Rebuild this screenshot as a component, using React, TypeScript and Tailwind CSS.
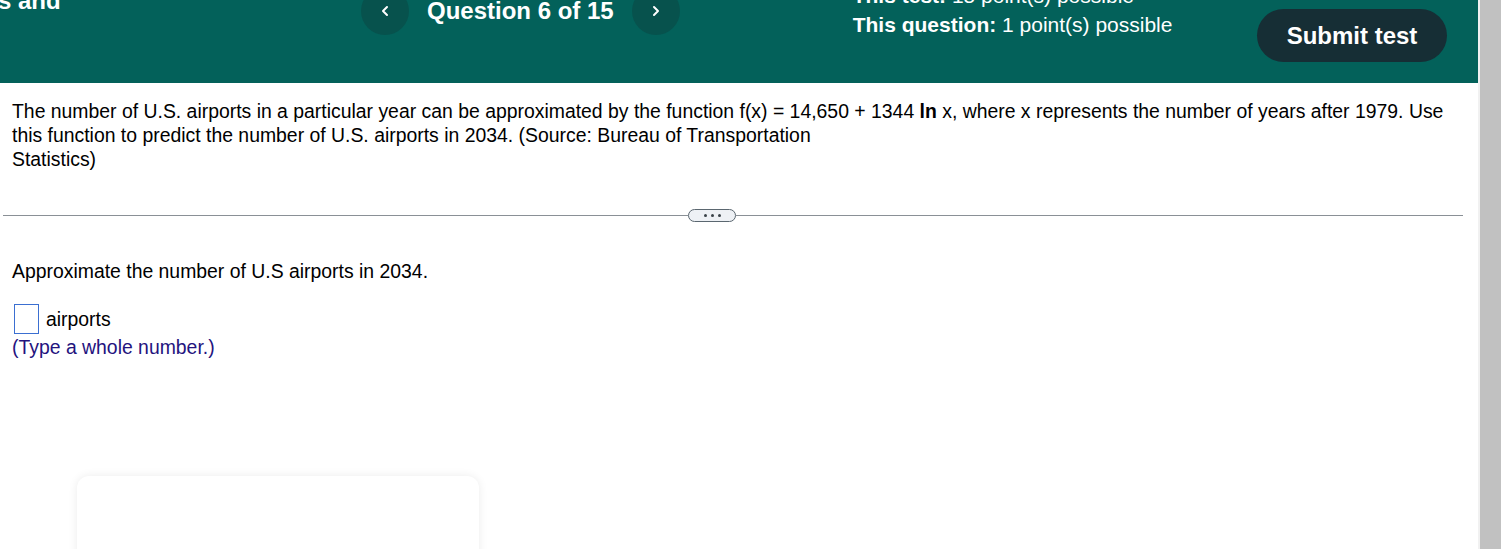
export default function App() {
  return (
    <div
      className="flex h-[549px] w-[1501px] overflow-hidden bg-white text-black"
      style={{ fontFamily: '"Liberation Sans", Arial, sans-serif' }}
    >
      <div className="relative w-[1478px] shrink-0">
        {/* top bar */}
        <header className="flex h-[83px] items-start overflow-hidden bg-[#03615a] text-white">
          <div className="w-[361px] shrink-0">
            <div className="-ml-[2px] -mt-[10px] text-[24px] font-bold leading-[22px]">s and</div>
          </div>
          <button className="-mt-[13px] flex h-12 w-12 shrink-0 items-center justify-center rounded-full bg-[#07524d]">
            <svg width="10" height="12" viewBox="0 0 10 12" fill="none">
              <path d="M7 2L3 6l4 4" stroke="white" strokeWidth="2" strokeLinecap="round" strokeLinejoin="round" />
            </svg>
          </button>
          <div className="ml-[18px] -mt-[3px] text-[24px] font-bold leading-[28px]">Question 6 of 15</div>
          <button className="ml-[18px] -mt-[13px] flex h-12 w-12 shrink-0 items-center justify-center rounded-full bg-[#07524d]">
            <svg width="10" height="12" viewBox="0 0 10 12" fill="none">
              <path d="M3 2l4 4-4 4" stroke="white" strokeWidth="2" strokeLinecap="round" strokeLinejoin="round" />
            </svg>
          </button>
          <div className="ml-[173px] -mt-[19px] text-[21px] leading-[29px]">
            <div>
              <span className="font-bold">This test:</span> 15 point(s) possible
            </div>
            <div>
              <span className="font-bold">This question:</span> 1 point(s) possible
            </div>
          </div>
          <button className="ml-auto mr-[31px] mt-[9px] h-[53px] w-[190px] rounded-full bg-[#162e35] text-[24px] font-bold text-white">
            Submit test
          </button>
        </header>

        {/* question stem */}
        <div className="px-3 pt-4 text-[19.4px] leading-6">
          The number of U.S. airports in a particular year can be approximated by the function f(x) = 14,650 + 1344{" "}
          <span className="font-bold">ln</span> x, where x represents the number of years after 1979. Use
          <br />
          this function to predict the number of U.S. airports in 2034. (Source: Bureau of Transportation
          <br />
          Statistics)
        </div>

        {/* divider */}
        <div className="ml-[3px] mr-[15px] mt-[38px] flex items-center">
          <div className="h-px flex-1 bg-[#8a9096]" />
          <div className="flex h-[13px] w-[48px] items-center justify-center gap-[4px] rounded-full border border-[#5b6770] bg-[#eef1f5]">
            <span className="h-[3px] w-[3px] rounded-full bg-[#3a4248]" />
            <span className="h-[3px] w-[3px] rounded-full bg-[#3a4248]" />
            <span className="h-[3px] w-[3px] rounded-full bg-[#3a4248]" />
          </div>
          <div className="h-px w-[727px] bg-[#8a9096]" />
        </div>

        {/* answer area */}
        <div className="px-3 pt-[37px] text-[19.4px] leading-6">
          <div>Approximate the number of U.S airports in 2034.</div>
          <div className="mt-[21px] flex items-center gap-[7px] pl-[2px]">
            <div className="h-[30px] w-[25px] border border-[#3b6fd1] bg-white" />
            <span>airports</span>
          </div>
          <div className="mt-[1px] text-[#24137e]">(Type a whole number.)</div>
        </div>

        {/* floating card */}
        <div className="ml-[77px] mt-[117px] h-[120px] w-[402px] rounded-xl bg-white shadow-[0_0_10px_rgba(0,0,0,0.08)]" />
      </div>

      {/* scrollbar */}
      <div className="flex w-[23px] shrink-0">
        <div className="w-[2px] bg-[#f1f1f1]" />
        <div className="flex-1 bg-[#c1c1c1]" />
      </div>
    </div>
  );
}
